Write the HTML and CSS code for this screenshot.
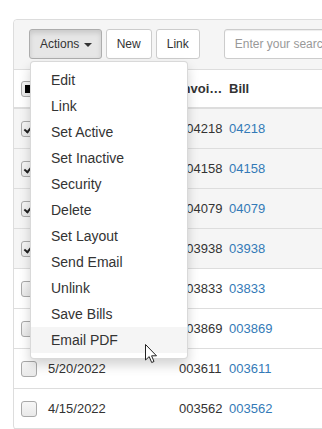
FILE: index.html
```html
<!DOCTYPE html>
<html lang="en">
<head>
  <meta charset="UTF-8" />
  <title>Bills</title>
  <link rel="stylesheet" href="styles.css">
</head>
<body>
  <div class="page">
    <div class="panel">
      <div class="toolbar">
        <div class="btn-group">
          <button class="btn active">Actions <span class="caret"></span></button>
          <ul class="dropdown-menu">
            <li><a href="#">Edit</a></li>
            <li><a href="#">Link</a></li>
            <li><a href="#">Set Active</a></li>
            <li><a href="#">Set Inactive</a></li>
            <li><a href="#">Security</a></li>
            <li><a href="#">Delete</a></li>
            <li><a href="#">Set Layout</a></li>
            <li><a href="#">Send Email</a></li>
            <li><a href="#">Unlink</a></li>
            <li><a href="#">Save Bills</a></li>
            <li class="hover"><a href="#">Email PDF</a></li>
          </ul>
        </div>
        <button class="btn">New</button>
        <button class="btn">Link</button>
        <input class="search" type="text" placeholder="Enter your search..." />
      </div>

      <div class="grid">
        <div class="row head">
          <span class="check partial"></span>
          <span>Date</span>
          <span class="clip">Invoice #</span>
          <span>Bill</span>
        </div>
        <div class="row selected">
          <span class="check on"></span><span>8/12/2022</span><span>004218</span><a href="#">04218</a>
        </div>
        <div class="row selected">
          <span class="check on"></span><span>8/02/2022</span><span>004158</span><a href="#">04158</a>
        </div>
        <div class="row selected">
          <span class="check on"></span><span>7/21/2022</span><span>004079</span><a href="#">04079</a>
        </div>
        <div class="row selected">
          <span class="check on"></span><span>7/01/2022</span><span>003938</span><a href="#">03938</a>
        </div>
        <div class="row">
          <span class="check"></span><span>6/17/2022</span><span>003833</span><a href="#">03833</a>
        </div>
        <div class="row">
          <span class="check"></span><span>6/03/2022</span><span>003869</span><a href="#">003869</a>
        </div>
        <div class="row">
          <span class="check"></span><span>5/20/2022</span><span>003611</span><a href="#">003611</a>
        </div>
        <div class="row">
          <span class="check"></span><span>4/15/2022</span><span>003562</span><a href="#">003562</a>
        </div>
      </div>
    </div>
  </div>

  <svg class="cursor" width="13" height="20" viewBox="0 0 13 20">
    <path d="M0.5 0.5 L0.5 16 L4.2 12.6 L6.7 18.5 L9 17.5 L6.6 11.8 L11.5 11.8 Z" fill="#fff" stroke="#222" stroke-width="1" stroke-linejoin="round"/>
  </svg>
</body>
</html>
```

FILE: styles.css
```css
body {
  margin: 0;
  font-family: "Liberation Sans", Arial, sans-serif;
  font-size: 13px;
  color: #333;
  background: #fff;
  overflow: hidden;
}

.page {
  padding: 19px 0 0 13px;
}

.panel {
  width: 420px;
  border: 1px solid #ddd;
  border-radius: 4px;
}

.toolbar {
  display: flex;
  align-items: center;
  gap: 4px;
  padding: 9px 15px 10px;
  background: #f5f5f5;
  border-bottom: 1px solid #ddd;
  border-radius: 4px 4px 0 0;
}

.btn-group {
  position: relative;
  display: flex;
}

.btn {
  height: 30px;
  padding: 5px 10px;
  font-family: inherit;
  font-size: 12px;
  line-height: 18px;
  white-space: nowrap;
  color: #333;
  background: #fff;
  border: 1px solid #ccc;
  border-radius: 3px;
}

.btn.active {
  padding-right: 9px;
  background: #e6e6e6;
  border-color: #adadad;
  box-shadow: inset 0 3px 5px rgba(0,0,0,0.125);
}

.caret {
  display: inline-block;
  width: 0;
  height: 0;
  margin-left: 1px;
  vertical-align: middle;
  border-top: 4px solid #333;
  border-left: 4px solid transparent;
  border-right: 4px solid transparent;
}

.search {
  width: 220px;
  height: 30px;
  box-sizing: border-box;
  margin-left: 20px;
  padding: 5px 10px;
  font-family: inherit;
  font-size: 12px;
  border: 1px solid #ccc;
  border-radius: 3px;
  box-shadow: inset 0 1px 1px rgba(0,0,0,0.075);
}

.search::placeholder {
  color: #999;
}

.dropdown-menu {
  position: absolute;
  top: 32px;
  left: 1px;
  z-index: 10;
  width: 158px;
  box-sizing: border-box;
  margin: 0;
  padding: 5px 0;
  list-style: none;
  font-size: 14px;
  background: #fff;
  border: 1px solid rgba(0,0,0,0.15);
  border-radius: 4px;
  box-shadow: 0 6px 12px rgba(0,0,0,0.175);
}

.dropdown-menu a {
  display: block;
  padding: 3px 20px;
  line-height: 20px;
  color: #333;
  text-decoration: none;
}

.dropdown-menu .hover a {
  background: #f5f5f5;
}

.row {
  display: grid;
  grid-template-columns: 27px 131px 50px 1fr;
  align-items: center;
  height: 40px;
  box-sizing: border-box;
  padding-left: 7px;
  border-bottom: 1px solid #ddd;
}

.row.head {
  height: 39px;
  font-weight: bold;
  border-bottom-width: 2px;
}

.row.selected {
  background: #f5f5f5;
}

.row a {
  color: #337ab7;
  text-decoration: none;
}

.clip {
  width: 46px;
  overflow: hidden;
  white-space: nowrap;
  text-overflow: ellipsis;
}

.check {
  position: relative;
  width: 16px;
  height: 16px;
  box-sizing: border-box;
  border: 1px solid #a9a9a9;
  border-radius: 3px;
  background: linear-gradient(#f7f7f7, #e9e9e9);
}

.check.partial::after {
  content: "";
  position: absolute;
  left: 3px;
  top: 3px;
  width: 8px;
  height: 8px;
  background: #000;
}

.check.on::after {
  content: "";
  position: absolute;
  left: 4px;
  top: 2px;
  width: 3px;
  height: 7px;
  border-right: 2px solid #222;
  border-bottom: 2px solid #222;
  transform: rotate(40deg);
}

.cursor {
  position: absolute;
  left: 145px;
  top: 344px;
  z-index: 20;
}
```
